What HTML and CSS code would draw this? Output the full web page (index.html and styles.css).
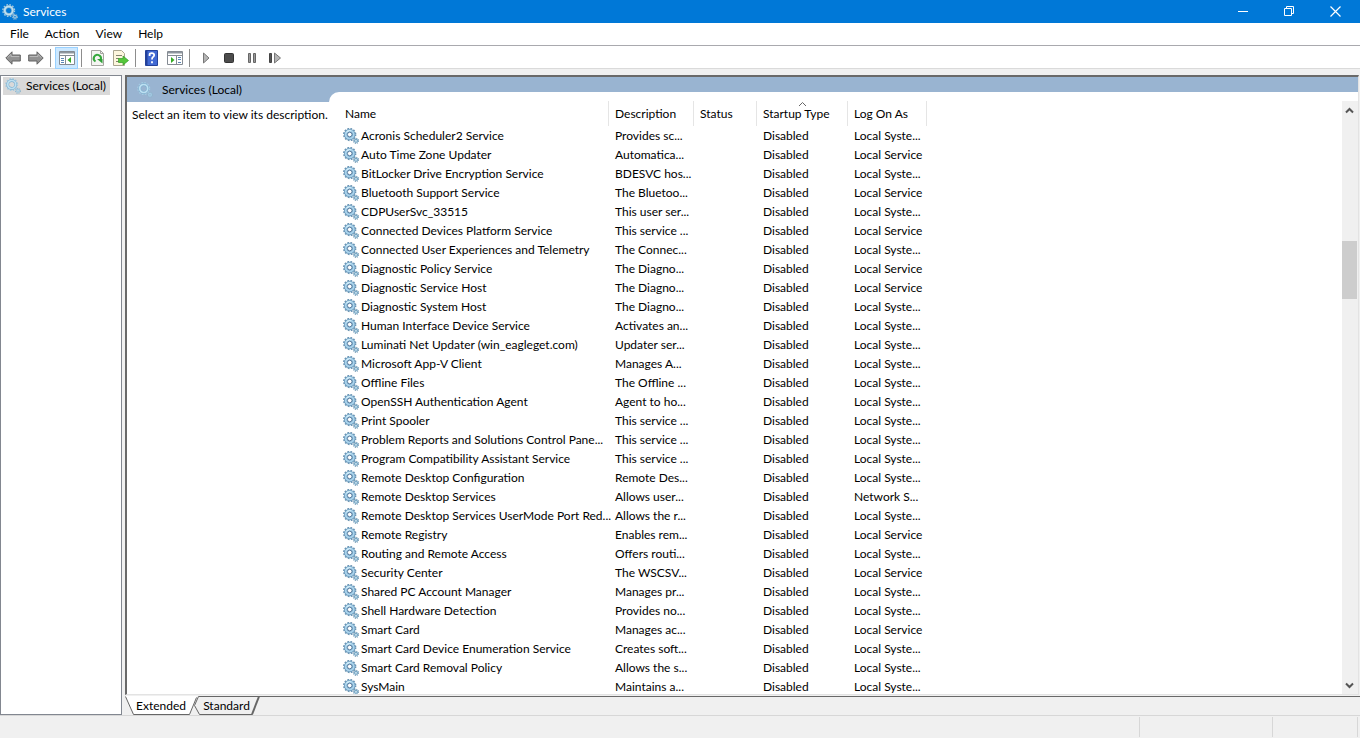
FILE: index.html
```html
<!DOCTYPE html>
<html lang="en">
<head>
<meta charset="utf-8">
<title>Services</title>
<link rel="stylesheet" href="styles.css">
</head>
<body>
<svg class="defs" aria-hidden="true">
  <symbol id="gear" viewBox="0 0 16 16">
    <circle cx="6.700" cy="6.500" r="5.900" fill="none" stroke="#6d96b4" stroke-width="1.600" stroke-dasharray="1.700 1.390"/>
    <circle cx="6.700" cy="6.500" r="4.100" fill="none" stroke="#6795b8" stroke-width="3.200"/>
    <circle cx="6.700" cy="6.500" r="4" fill="none" stroke="#a9d3ec" stroke-width="2"/>
    <path d="M3.600 4.500A3.700 3.700 0 0 1 8 3" fill="none" stroke="#d6f0fa" stroke-width="1.200"/>
    <circle cx="6.700" cy="6.500" r="2.300" fill="#fff" stroke="#466f96" stroke-width=".9"/>
    <circle cx="13" cy="12.800" r="2.500" fill="none" stroke="#6f97b3" stroke-width="1.200" stroke-dasharray="1.100 .86"/>
    <circle cx="13" cy="12.800" r="1.500" fill="#dff1f8" stroke="#79a8c6" stroke-width="1.300"/>
  </symbol>
  <symbol id="gear-light" viewBox="0 0 16 16">
    <circle cx="6.700" cy="6.500" r="5.700" fill="none" stroke="#a4cbe2" stroke-width="1.600" stroke-dasharray="1.600 1.380"/>
    <circle cx="6.700" cy="6.500" r="4" fill="none" stroke="#7fb0cf" stroke-width="2.800"/>
    <circle cx="6.700" cy="6.500" r="4" fill="none" stroke="#bde0f2" stroke-width="1.700"/>
    <circle cx="13" cy="12.800" r="2.400" fill="none" stroke="#8fb4cb" stroke-width="1.200" stroke-dasharray="1.100 .78"/>
    <circle cx="13" cy="12.800" r="1.400" fill="none" stroke="#a0cae2" stroke-width="1.200"/>
  </symbol>
  <symbol id="arrow" viewBox="0 0 16 14">
    <path d="M.8 7 7 .8v3.200h8.300v6H7v3.200z" fill="#929292" stroke="#626262"/>
    <path d="M2.500 6.700 6 3.300v2.200h8.300" fill="none" stroke="#b9b9b9"/>
  </symbol>
</svg>

<header class="titlebar">
  <svg class="icon"><use href="#gear-light"/></svg>
  <h1 class="title">Services</h1>
  <div class="window-buttons">
    <button aria-label="Minimize"><svg width="11" height="11"><path d="M0 5.500h10" stroke="#fff"/></svg></button>
    <button aria-label="Restore"><svg width="11" height="11"><path d="M.5 2.500h7v7h-7zM2.500 2.500v-2h7v7h-2" fill="none" stroke="#fff"/></svg></button>
    <button aria-label="Close"><svg width="11" height="11"><path d="m.5.500 10 10m0-10-10 10" stroke="#fff" stroke-width="1.200"/></svg></button>
  </div>
</header>

<nav class="menubar">
  <button>File</button><button>Action</button><button>View</button><button>Help</button>
</nav>

<div class="toolbar" role="toolbar">
  <button class="tool" aria-label="Back"><svg width="16" height="14"><use href="#arrow"/></svg></button>
  <button class="tool" aria-label="Forward"><svg class="flip" width="16" height="14"><use href="#arrow"/></svg></button>
  <span class="divider"></span>
  <button class="tool active" aria-label="Show console tree"><svg width="16" height="14">
    <path d="M.5.500h15v13H.5z" fill="#fff" stroke="#858b93"/><path d="M1 1h14v1.500H1z" fill="#8e969f"/><path d="M1 4.500h14M6.500 5v8" stroke="#858b93"/><path d="M2 7.500h3M2 9.500h3M2 11.500h3" stroke="#5b86b5"/><path d="M12 6v6L8.500 9z" fill="#35ab25"/></svg></button>
  <span class="divider"></span>
  <button class="tool" aria-label="Refresh"><svg width="14" height="16">
    <path d="M.5.500h9l3 3v12H.5z" fill="#f5f5f2" stroke="#a5a5a0"/><path d="M9.500.500v3h3" fill="none" stroke="#a5a5a0"/><path d="M4.500 11.500A3.600 3.600 0 1 1 9.800 9.500" fill="none" stroke="#35a83c" stroke-width="2"/><path d="M6 9h5.500v4.500z" fill="#2fa037"/></svg></button>
  <button class="tool" aria-label="Export list"><svg width="16" height="16">
    <path d="M.5.500h8l3 3v12H.5z" fill="#fdf6dd" stroke="#aaa58f"/><path d="M3 5.500h6M3 8.500h3M3 11.500h3" stroke="#84826f"/><path d="M5.500 8.500H10V6l5.500 4.500L10 15v-2.500H5.500z" fill="#56c63b" stroke="#319d25" stroke-width=".7"/></svg></button>
  <span class="divider"></span>
  <button class="tool" aria-label="Help"><svg width="13" height="16">
    <path d="M.5.500h12v15H.5z" fill="#4169d3" stroke="#24429a"/><path d="M1 1h1.500v14H1z" fill="#23409a"/><path d="M4.600 6V4.500q0-1.300 2.200-1.300T9.200 5q0 1.300-1.200 2Q7 7.600 7 9.500M7 11.200v2" fill="none" stroke="#fff" stroke-width="1.800"/></svg></button>
  <button class="tool" aria-label="Show action pane"><svg width="16" height="14">
    <path d="M.5.500h15v13H.5z" fill="#fff" stroke="#858b93"/><path d="M1 1h14v1.500H1z" fill="#8e969f"/><path d="M1 4.500h14M9.500 5v8" stroke="#858b93"/><path d="M11 6.500h3M11 8.500h3M11 11.500h3" stroke="#5b86b5"/><path d="M4 6v6l3.500-3z" fill="#35ab25"/></svg></button>
  <span class="divider"></span>
  <button class="tool" aria-label="Start service"><svg width="12" height="12"><path d="M3.500 1v10l5.500-5z" fill="#b5b5b5" stroke="#777"/></svg></button>
  <button class="tool" aria-label="Stop service"><svg width="12" height="12"><rect x="1.500" y="1.500" width="9" height="9" rx="1" fill="#4c4c4c" stroke="#333"/></svg></button>
  <button class="tool" aria-label="Pause service"><svg width="12" height="12"><path d="M2.500 1.500h2v9h-2zM7.500 1.500h2v9h-2z" fill="#999" stroke="#666"/></svg></button>
  <button class="tool" aria-label="Restart service"><svg width="12" height="12"><path d="M.5 1.500h2v9h-2z" fill="#555" stroke="#444"/><path d="M5.500 1v10l6-5z" fill="#b5b5b5" stroke="#777"/></svg></button>
</div>

<main class="workspace">
  <aside class="tree">
    <button class="tree-item"><svg class="icon"><use href="#gear-light"/></svg>Services (Local)</button>
  </aside>
  <section class="console">
    <div class="view">
      <div class="details">
        <h2 class="view-title"><svg class="icon"><use href="#gear-light"/></svg>Services (Local)</h2>
        <p class="hint">Select an item to view its description.</p>
      </div>
      <div class="band">
        <div class="sheet">
          <div class="list">
            <table class="services">
              <colgroup><col class="c-name"><col class="c-desc"><col class="c-status"><col class="c-startup"><col class="c-logon"></colgroup>
              <thead><tr><th>Name</th><th>Description</th><th>Status</th><th aria-sort="ascending">Startup Type<svg class="sort" width="9" height="5"><path d="m1 4 3.500-3.500L8 4" fill="none" stroke="#666"/></svg></th><th>Log On As</th></tr></thead>
              <tbody>
<tr><td><svg class="icon"><use href="#gear"/></svg>Acronis Scheduler2 Service</td><td>Provides sc...</td><td></td><td>Disabled</td><td>Local Syste...</td></tr>
<tr><td><svg class="icon"><use href="#gear"/></svg>Auto Time Zone Updater</td><td>Automatica...</td><td></td><td>Disabled</td><td>Local Service</td></tr>
<tr><td><svg class="icon"><use href="#gear"/></svg>BitLocker Drive Encryption Service</td><td>BDESVC hos...</td><td></td><td>Disabled</td><td>Local Syste...</td></tr>
<tr><td><svg class="icon"><use href="#gear"/></svg>Bluetooth Support Service</td><td>The Bluetoo...</td><td></td><td>Disabled</td><td>Local Service</td></tr>
<tr><td><svg class="icon"><use href="#gear"/></svg>CDPUserSvc_33515</td><td>This user ser...</td><td></td><td>Disabled</td><td>Local Syste...</td></tr>
<tr><td><svg class="icon"><use href="#gear"/></svg>Connected Devices Platform Service</td><td>This service ...</td><td></td><td>Disabled</td><td>Local Service</td></tr>
<tr><td><svg class="icon"><use href="#gear"/></svg>Connected User Experiences and Telemetry</td><td>The Connec...</td><td></td><td>Disabled</td><td>Local Syste...</td></tr>
<tr><td><svg class="icon"><use href="#gear"/></svg>Diagnostic Policy Service</td><td>The Diagno...</td><td></td><td>Disabled</td><td>Local Service</td></tr>
<tr><td><svg class="icon"><use href="#gear"/></svg>Diagnostic Service Host</td><td>The Diagno...</td><td></td><td>Disabled</td><td>Local Service</td></tr>
<tr><td><svg class="icon"><use href="#gear"/></svg>Diagnostic System Host</td><td>The Diagno...</td><td></td><td>Disabled</td><td>Local Syste...</td></tr>
<tr><td><svg class="icon"><use href="#gear"/></svg>Human Interface Device Service</td><td>Activates an...</td><td></td><td>Disabled</td><td>Local Syste...</td></tr>
<tr><td><svg class="icon"><use href="#gear"/></svg>Luminati Net Updater (win_eagleget.com)</td><td>Updater ser...</td><td></td><td>Disabled</td><td>Local Syste...</td></tr>
<tr><td><svg class="icon"><use href="#gear"/></svg>Microsoft App-V Client</td><td>Manages A...</td><td></td><td>Disabled</td><td>Local Syste...</td></tr>
<tr><td><svg class="icon"><use href="#gear"/></svg>Offline Files</td><td>The Offline ...</td><td></td><td>Disabled</td><td>Local Syste...</td></tr>
<tr><td><svg class="icon"><use href="#gear"/></svg>OpenSSH Authentication Agent</td><td>Agent to ho...</td><td></td><td>Disabled</td><td>Local Syste...</td></tr>
<tr><td><svg class="icon"><use href="#gear"/></svg>Print Spooler</td><td>This service ...</td><td></td><td>Disabled</td><td>Local Syste...</td></tr>
<tr><td><svg class="icon"><use href="#gear"/></svg>Problem Reports and Solutions Control Pane...</td><td>This service ...</td><td></td><td>Disabled</td><td>Local Syste...</td></tr>
<tr><td><svg class="icon"><use href="#gear"/></svg>Program Compatibility Assistant Service</td><td>This service ...</td><td></td><td>Disabled</td><td>Local Syste...</td></tr>
<tr><td><svg class="icon"><use href="#gear"/></svg>Remote Desktop Configuration</td><td>Remote Des...</td><td></td><td>Disabled</td><td>Local Syste...</td></tr>
<tr><td><svg class="icon"><use href="#gear"/></svg>Remote Desktop Services</td><td>Allows user...</td><td></td><td>Disabled</td><td>Network S...</td></tr>
<tr><td><svg class="icon"><use href="#gear"/></svg>Remote Desktop Services UserMode Port Red...</td><td>Allows the r...</td><td></td><td>Disabled</td><td>Local Syste...</td></tr>
<tr><td><svg class="icon"><use href="#gear"/></svg>Remote Registry</td><td>Enables rem...</td><td></td><td>Disabled</td><td>Local Service</td></tr>
<tr><td><svg class="icon"><use href="#gear"/></svg>Routing and Remote Access</td><td>Offers routi...</td><td></td><td>Disabled</td><td>Local Syste...</td></tr>
<tr><td><svg class="icon"><use href="#gear"/></svg>Security Center</td><td>The WSCSV...</td><td></td><td>Disabled</td><td>Local Service</td></tr>
<tr><td><svg class="icon"><use href="#gear"/></svg>Shared PC Account Manager</td><td>Manages pr...</td><td></td><td>Disabled</td><td>Local Syste...</td></tr>
<tr><td><svg class="icon"><use href="#gear"/></svg>Shell Hardware Detection</td><td>Provides no...</td><td></td><td>Disabled</td><td>Local Syste...</td></tr>
<tr><td><svg class="icon"><use href="#gear"/></svg>Smart Card</td><td>Manages ac...</td><td></td><td>Disabled</td><td>Local Service</td></tr>
<tr><td><svg class="icon"><use href="#gear"/></svg>Smart Card Device Enumeration Service</td><td>Creates soft...</td><td></td><td>Disabled</td><td>Local Syste...</td></tr>
<tr><td><svg class="icon"><use href="#gear"/></svg>Smart Card Removal Policy</td><td>Allows the s...</td><td></td><td>Disabled</td><td>Local Syste...</td></tr>
<tr><td><svg class="icon"><use href="#gear"/></svg>SysMain</td><td>Maintains a...</td><td></td><td>Disabled</td><td>Local Syste...</td></tr>
              </tbody>
            </table>
          </div>
          <div class="scrollbar">
            <button aria-label="Scroll up"><svg width="9" height="7"><path d="m1 5.500 3.500-3.500L8 5.500" fill="none" stroke="#555" stroke-width="2"/></svg></button>
            <div class="track"><div class="thumb"></div></div>
            <button aria-label="Scroll down"><svg width="9" height="7"><path d="M1 1.500 4.500 5 8 1.500" fill="none" stroke="#555" stroke-width="2"/></svg></button>
          </div>
        </div>
      </div>
    </div>
    <nav class="tabs">
      <button class="tab tab-extended"><svg class="tab-shape" width="73" height="19"><path d="M0 0h72l-7 18H9z" fill="#fff"/><path d="m.5.500 8 18h56l7-17" fill="none" stroke="#666"/></svg><span>Extended</span></button>
      <button class="tab tab-standard"><svg class="tab-shape" width="67" height="19"><path d="m4.500.500-4 9 5 9h53l7-18z" fill="#f0f0f0"/><path d="M66 .5H4.500l-4 9 5 9h53" fill="none" stroke="#666"/><path d="m58 18.500 7-18" stroke="#666" stroke-width="2"/></svg><span>Standard</span></button>
      <div class="tab-rest"></div>
    </nav>
  </section>
</main>

<footer class="statusbar"><span class="cell grow"></span><span class="cell wide"></span><span class="cell"></span></footer>
</body>
</html>
```

FILE: styles.css
```css
* { box-sizing: border-box; }

body {
  margin: 0;
  height: 100vh;
  display: flex;
  flex-direction: column;
  overflow: hidden;
  background: #f0f0f0;
  color: #000;
  font: 12px/18px Lato, "Open Sans", sans-serif;
}

button {
  margin: 0;
  padding: 0;
  border: 0;
  background: none;
  color: inherit;
  font: inherit;
}

svg { display: block; flex: none; }
.defs { position: absolute; width: 0; height: 0; }
.icon { width: 16px; height: 16px; }

.titlebar {
  flex: none;
  height: 23px;
  display: flex;
  align-items: center;
  gap: 5px;
  padding-left: 2px;
  background: #0078d7;
  color: #fff;
}
.title { margin: 0; font-size: 12px; font-weight: 400; }
.window-buttons { display: flex; margin-left: auto; padding-right: 2px; }
.window-buttons button {
  width: 46px;
  height: 21px;
  display: grid;
  place-items: center;
}

.menubar {
  flex: none;
  display: flex;
  height: 23px;
  padding-left: 2px;
  background: #fff;
  border-bottom: 1px solid #a9a9ae;
}
.menubar button { padding: 0 8px; }

.toolbar {
  flex: none;
  display: flex;
  align-items: center;
  height: 23px;
  padding: 1px 0 0 1px;
  background: #fff;
  border-bottom: 1px solid #dadada;
}
.tool { width: 23px; height: 22px; display: grid; place-items: center; }
.tool.active { background: #cce8ff; border: 1px solid #99d1ff; }
.flip { transform: scaleX(-1); }
.divider { width: 1px; height: 18px; margin: 0 4px 0 3px; background: #8d8d8d; }

.workspace {
  flex: 1;
  min-height: 0;
  display: flex;
  gap: 3px;
  padding-top: 6px;
}
.tree {
  flex: none;
  width: 122px;
  padding: 1px 2px;
  background: #fff;
  border: 1px solid #828790;
}
.tree-item {
  display: flex;
  align-items: center;
  gap: 5px;
  height: 18px;
  padding: 0 4px 0 2px;
  background: #d9d9d9;
  white-space: nowrap;
}

.console { flex: 1; min-width: 0; display: flex; flex-direction: column; }
.view {
  flex: 1;
  min-height: 0;
  display: flex;
  margin-right: 1px;
  background: #fff;
  border: solid;
  border-width: 2px 1px 1px 2px;
  border-color: #696969 #e3e3e3 #e3e3e3 #696969;
}
.details { flex: none; width: 202px; }
.view-title {
  display: flex;
  align-items: center;
  gap: 9px;
  height: 25px;
  margin: 0;
  padding-left: 10px;
  background: #99b4d1;
  font-size: 12px;
  font-weight: 400;
}
.hint { margin: 4px 0 0 5px; white-space: nowrap; }
.band { flex: 1; min-width: 0; display: flex; padding-top: 15px; background: linear-gradient(#99b4d1 25px, #fff 25px); }
.sheet {
  flex: 1;
  min-width: 0;
  display: flex;
  padding-top: 9px;
  background: #fff;
  border-top-left-radius: 10px;
}
.list { flex: 1; min-width: 0; overflow: hidden; padding-left: 8px; }

.services { table-layout: fixed; width: 590px; border-collapse: separate; border-spacing: 0; }
.c-name { width: 272px; }
.c-desc { width: 85px; }
.c-status { width: 63px; }
.c-startup { width: 91px; }
.c-logon { width: 79px; }
.services th {
  position: relative;
  height: 25px;
  padding: 0 0 0 6px;
  border-right: 1px solid #e5e5e5;
  font-weight: 400;
  text-align: left;
}
.services td { height: 19px; padding: 0 0 0 6px; line-height: 18px; white-space: nowrap; }
.services th:first-child { padding-left: 8px; }
.services td:first-child { display: flex; align-items: center; gap: 2px; }
.sort { position: absolute; top: 1px; left: 41px; }

.scrollbar {
  flex: none;
  width: 16px;
  display: flex;
  flex-direction: column;
  background: #f0f0f0;
}
.scrollbar button { height: 18px; padding-right: 2px; display: grid; place-items: center; }
.track { flex: 1; }
.thumb { width: 15px; height: 10.5%; margin-top: 122px; background: #cdcdcd; }

.tabs { flex: none; display: flex; height: 20px; padding-top: 1px; }
.tab { position: relative; height: 19px; }
.tab span { position: relative; }
.tab-shape { position: absolute; top: 0; left: 0; }
.tab-extended { width: 69px; padding-left: 3px; }
.tab-standard { width: 65px; }
.tab-rest { flex: 1; border-top: 1px solid #696969; }

.statusbar {
  flex: none;
  display: flex;
  height: 23px;
  padding: 1px 2px 1px 0;
  border-top: 1px solid #d7d7d7;
}
.cell { width: 85px; border-right: 1px solid #d7d7d7; }
.cell.wide { width: 133px; }
.cell.grow { flex: 1; }
```
